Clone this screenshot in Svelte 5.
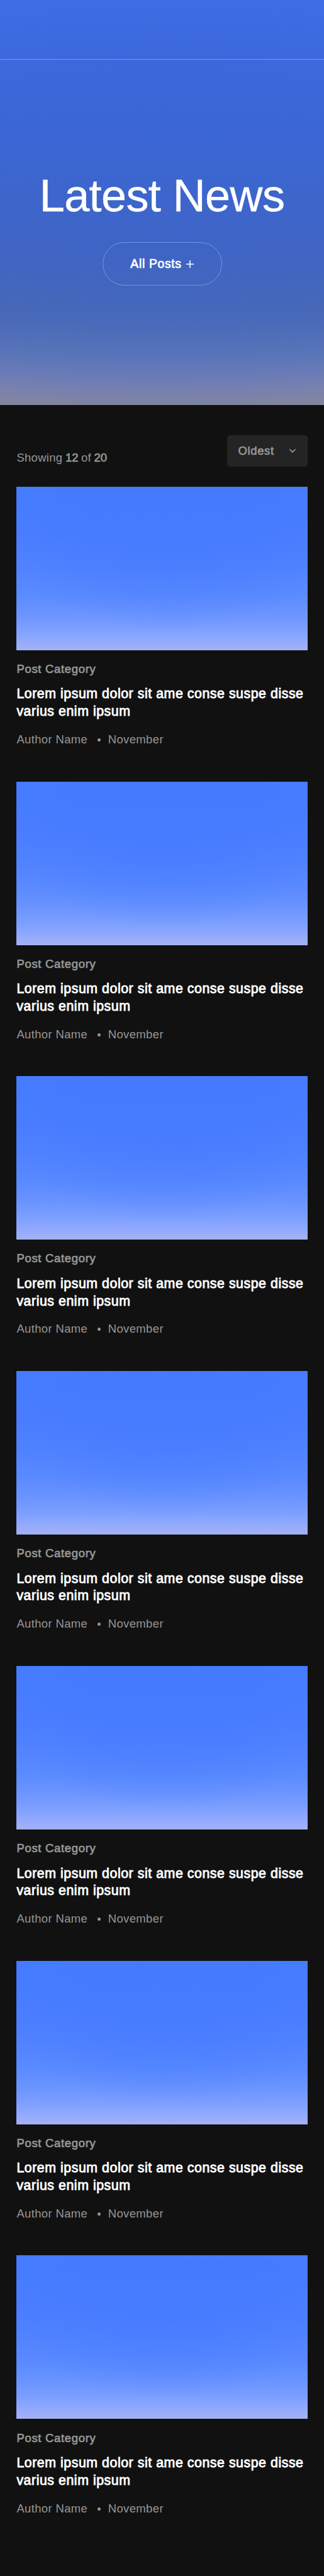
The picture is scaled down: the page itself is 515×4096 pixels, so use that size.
<script lang="ts">
  type Post = {
    category: string;
    title: string;
    author: string;
    date: string;
  };

  const posts: Post[] = Array.from({ length: 7 }, () => ({
    category: 'Post Category',
    title: 'Lorem ipsum dolor sit ame conse suspe disse varius enim ipsum',
    author: 'Author Name',
    date: 'November'
  }));

  const total = 20;
  const shown = 12;
</script>

<div class="page">
  <header class="hero">
    <nav class="nav"></nav>
    <h1>Latest News</h1>
    <button class="filter" type="button">
      <span>All Posts</span>
      <svg width="12" height="12" viewBox="0 0 12 12" fill="none">
        <path d="M6 0V12M0 6H12" stroke="#fff" stroke-width="1.6" />
      </svg>
    </button>
  </header>

  <main class="content">
    <div class="toolbar">
      <p class="count">Showing <b>{shown}</b> of <b>{total}</b></p>
      <button class="sort" type="button">
        <span>Oldest</span>
        <svg width="12" height="8" viewBox="0 0 12 8" fill="none">
          <path d="M1.4 1.2L6 5.8L10.6 1.2" stroke="#a0a0a0" stroke-width="1.6" />
        </svg>
      </button>
    </div>

    <div class="posts">
      {#each posts as post}
        <article class="post">
          <div class="cover"></div>
          <p class="category">{post.category}</p>
          <h2>{post.title}</h2>
          <div class="meta">
            <span>{post.author}</span>
            <i class="dot"></i>
            <span>{post.date}</span>
          </div>
        </article>
      {/each}
    </div>
  </main>
</div>

<style>
  :global(body) {
    margin: 0;
    background: #111;
  }

  .page {
    width: 515px;
    height: 4096px;
    overflow: hidden;
    background: #111;
    color: #969696;
    font-family: "Liberation Sans", Arial, sans-serif;
    font-size: 18.5px;
    line-height: 24px;
  }

  h1, h2, p {
    margin: 0;
  }

  button {
    box-sizing: border-box;
    font: inherit;
  }

  /* medium weight: regular outlines thickened a little */
  button, b, .category {
    font-weight: 400;
    -webkit-text-stroke: 0.7px currentColor;
  }

  .hero {
    display: flex;
    flex-direction: column;
    align-items: center;
    height: 643.7px;
    background:
      radial-gradient(ellipse 75% 100% at 50% 40%, rgba(58, 101, 212, 0.25), rgba(64, 110, 225, 0) 100%),
      linear-gradient(180deg, #3e6ee8 0%, #3c69dd 14%, #3b66d4 35%, #3e65c8 52%, #4064c2 62%, #4567b9 73%, #4c6bb5 80%, #5a75b6 87%, #6c7cb5 92%, #7d82ac 96%, #8286a2 98.5%, #85879a 100%);
  }

  .nav {
    box-sizing: border-box;
    width: 100%;
    height: 95px;
    border-bottom: 1px solid rgba(255, 255, 255, 0.32);
  }

  h1 {
    margin-top: 176px;
    color: #fff;
    font-size: 72px;
    font-weight: 400;
    line-height: 80px;
    letter-spacing: -0.6px;
    white-space: nowrap;
    -webkit-text-stroke: 0.4px currentColor;
  }

  .filter {
    display: flex;
    align-items: center;
    justify-content: center;
    gap: 7px;
    width: 190px;
    height: 69px;
    margin-top: 34px;
    padding: 0;
    border: 1px solid rgba(160, 195, 255, 0.5);
    border-radius: 35px;
    background: none;
    color: #fff;
    font-size: 19.3px;
    letter-spacing: 0.7px;
  }

  .content {
    padding: 48.3px 26.4px 0;
  }

  .toolbar {
    display: flex;
    align-items: flex-end;
    justify-content: space-between;
  }

  .count {
    padding-bottom: 1.5px;
    letter-spacing: 0.3px;
    word-spacing: -1px;
  }

  .count b {
    letter-spacing: 0;
  }

  .sort {
    display: flex;
    align-items: center;
    justify-content: space-between;
    width: 128px;
    height: 50px;
    padding: 0 18px;
    border: 0;
    border-radius: 5px;
    background: #242424;
    color: #969696;
    letter-spacing: 0.6px;
  }

  .posts {
    display: flex;
    flex-direction: column;
    gap: 54.7px;
    margin-top: 31.8px;
  }

  .cover {
    height: 260px;
    background:
      radial-gradient(ellipse 68% 88% at 52% 0%, rgba(68, 121, 255, 0.6) 45%, rgba(68, 121, 255, 0) 100%),
      linear-gradient(180deg, #467cff 0%, #4b7eff 30%, #5284ff 50%, #5a8aff 65%, #6a94ff 77%, #7b9eff 86%, #8fa8ff 93%, #a4b2f4 100%);
  }

  .category {
    margin-top: 18.1px;
    letter-spacing: 0.68px;
  }

  h2 {
    margin-top: 14.5px;
    color: #fff;
    font-size: 21.3px;
    font-weight: 400;
    line-height: 27.7px;
    letter-spacing: 0.56px;
    -webkit-text-stroke: 0.85px currentColor;
  }

  .meta {
    display: flex;
    align-items: center;
    margin-top: 18.1px;
    letter-spacing: 0.35px;
  }

  .dot {
    width: 5px;
    height: 5px;
    margin: 1px 12px 0 15.5px;
    border-radius: 50%;
    background: #969696;
  }
</style>
